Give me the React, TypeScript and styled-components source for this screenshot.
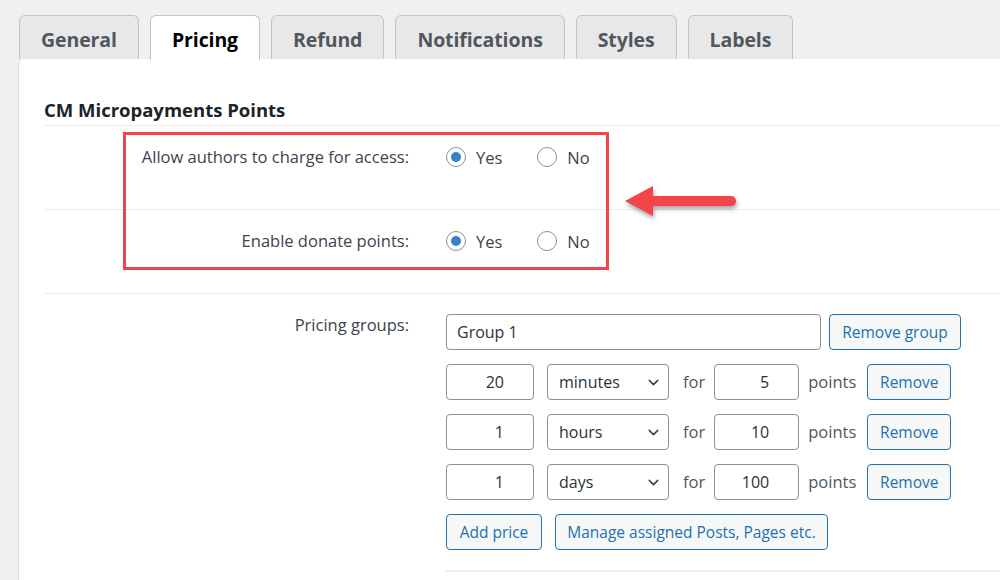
import React from "react";
import styled, { createGlobalStyle } from "styled-components";
import { ChevronDown } from "lucide-react";

const GlobalStyle = createGlobalStyle`
  html, body {
    margin: 0;
    padding: 0;
    background: #f0f0f1;
    font-family: "Open Sans", "Noto Sans", sans-serif;
    color: #3c434a;
  }
  * { box-sizing: border-box; }
`;

export const Page = styled.div`
  position: relative;
  width: 1000px;
  height: 580px;
  overflow: hidden;
  padding: 15px 0 0 18px;
`;

export const TabBar = styled.div`
  display: flex;
  gap: 11px;
  padding-left: 1px;
  height: 44px;
`;

export const Tab = styled.div<{ $active?: boolean }>`
  display: flex;
  align-items: center;
  justify-content: center;
  height: ${(p) => (p.$active ? "45px" : "44px")};
  padding: 3px 21px 0;
  border: 1px solid #c3c4c7;
  border-bottom: none;
  border-radius: 6px 6px 0 0;
  background: ${(p) => (p.$active ? "#fff" : "#e8e8e8")};
  color: ${(p) => (p.$active ? "#000" : "#50575e")};
  font-size: 19.5px;
  font-weight: 700;
  letter-spacing: -0.1px;
  position: relative;
  z-index: 1;
`;

export const Panel = styled.div`
  background: #fff;
  border-left: 1px solid #dcdcde;
  border-radius: 6px 0 0 0;
  padding: 0 0 0 25px;
  height: 600px;
`;

export const Heading = styled.h2`
  margin: 0;
  padding: 39px 0 3px;
  font-size: 18.5px;
  font-weight: 700;
  line-height: 24px;
  color: #1d2327;
`;

export const Row = styled.div`
  display: grid;
  grid-template-columns: 365px 1fr;
  column-gap: 37px;
  border-top: 1px solid #ececec;
  padding: 19px 0 20px;
`;

export const Label = styled.div`
  text-align: right;
  font-size: 16.5px;
  line-height: 24px;
  color: #3c434a;
`;

export const RadioField = styled.div`
  display: flex;
  align-items: center;
  height: 24px;
  margin-bottom: 20px;
`;

export const RadioOption = styled.label`
  display: flex;
  align-items: center;
  gap: 10px;
  margin-right: 35px;
  font-size: 16.5px;
  color: #3c434a;
`;

export const Radio = styled.input`
  appearance: none;
  margin: 0;
  width: 20px;
  height: 20px;
  border-radius: 50%;
  border: 1px solid #8c8f94;
  background: #fff;
  display: grid;
  place-items: center;
  &:checked::before {
    content: "";
    width: 10px;
    height: 10px;
    border-radius: 50%;
    background: #3582c4;
  }
`;

export const Fields = styled.div`
  display: flex;
  flex-direction: column;
  gap: 14px;
  padding: 1px 0 20px;
  border-bottom: 2px solid #ececec;
  margin-bottom: -40px;
`;

export const Line = styled.div`
  display: flex;
  align-items: center;
  height: 36px;
  font-size: 16.5px;
  color: #50575e;
`;

export const TextInput = styled.input<{ $width: number; $number?: boolean }>`
  width: ${(p) => p.$width}px;
  height: 36px;
  margin: 0;
  border: 1px solid #8c8f94;
  border-radius: 4px;
  background: #fff;
  font-family: inherit;
  font-size: 16px;
  color: #2c3338;
  text-align: ${(p) => (p.$number ? "right" : "left")};
  padding: ${(p) => (p.$number ? "0 29px 0 8px" : "0 10px")};
  outline: none;
`;

export const SelectWrap = styled.div`
  position: relative;
  width: 122px;
  height: 36px;
  margin-left: 13px;
  margin-right: 14px;
  svg {
    position: absolute;
    right: 7px;
    top: 10px;
    color: #3c434a;
    pointer-events: none;
  }
`;

export const Select = styled.select`
  appearance: none;
  width: 100%;
  height: 100%;
  margin: 0;
  border: 1px solid #8c8f94;
  border-radius: 4px;
  background: #fff;
  padding: 0 30px 0 11px;
  font-family: inherit;
  font-size: 16px;
  color: #2c3338;
`;

export const Word = styled.span<{ $left: number; $right: number }>`
  margin: 0 ${(p) => p.$right}px 0 ${(p) => p.$left}px;
  line-height: 36px;
`;

export const Button = styled.button<{ $width: number }>`
  width: ${(p) => p.$width}px;
  height: 36px;
  margin: 0;
  padding: 0;
  border: 1px solid #2271b1;
  border-radius: 4px;
  background: #f6f7f7;
  color: #2271b1;
  font-family: inherit;
  font-size: 15.5px;
  cursor: pointer;
`;

export const Callout = styled.div`
  position: absolute;
  left: 123px;
  top: 132px;
  width: 486px;
  height: 138px;
  border: 3px solid #f2444b;
  pointer-events: none;
`;

export const Arrow = styled.svg`
  position: absolute;
  left: 615px;
  top: 178px;
  filter: drop-shadow(1px 3px 2px rgba(0, 0, 0, 0.35));
`;

const prices = [
  { amount: "20", unit: "minutes", points: "5" },
  { amount: "1", unit: "hours", points: "10" },
  { amount: "1", unit: "days", points: "100" },
];

const tabs = ["General", "Pricing", "Refund", "Notifications", "Styles", "Labels"];

const YesNo = ({ name }: { name: string }) => (
  <RadioField>
    <RadioOption>
      <Radio type="radio" name={name} defaultChecked />
      Yes
    </RadioOption>
    <RadioOption>
      <Radio type="radio" name={name} />
      No
    </RadioOption>
  </RadioField>
);

export default function App() {
  return (
    <Page>
      <GlobalStyle />
      <TabBar>
        {tabs.map((t) => (
          <Tab key={t} $active={t === "Pricing"}>
            {t}
          </Tab>
        ))}
      </TabBar>
      <Panel>
        <Heading>CM Micropayments Points</Heading>
        <Row>
          <Label>Allow authors to charge for access:</Label>
          <YesNo name="charge" />
        </Row>
        <Row>
          <Label>Enable donate points:</Label>
          <YesNo name="donate" />
        </Row>
        <Row>
          <Label>Pricing groups:</Label>
          <Fields>
            <Line>
              <TextInput $width={375} defaultValue="Group 1" />
              <Button $width={132} style={{ marginLeft: 8 }}>
                Remove group
              </Button>
            </Line>
            {prices.map((p, i) => (
              <Line key={i}>
                <TextInput $width={88} $number defaultValue={p.amount} />
                <SelectWrap>
                  <Select defaultValue={p.unit}>
                    <option value="minutes">minutes</option>
                    <option value="hours">hours</option>
                    <option value="days">days</option>
                  </Select>
                  <ChevronDown size={17} strokeWidth={2.2} />
                </SelectWrap>
                <Word $left={0} $right={9}>for</Word>
                <TextInput $width={85} $number defaultValue={p.points} />
                <Word $left={9} $right={11}>points</Word>
                <Button $width={84}>Remove</Button>
              </Line>
            ))}
            <Line>
              <Button $width={96}>Add price</Button>
              <Button $width={273} style={{ marginLeft: 13 }}>
                Manage assigned Posts, Pages etc.
              </Button>
            </Line>
          </Fields>
        </Row>
      </Panel>
      <Callout />
      <Arrow width="130" height="50" viewBox="0 0 130 50">
        <path d="M10 23 L38 8 L38 38 Z" fill="#f2444b" />
        <line x1="36" y1="23" x2="116" y2="23" stroke="#f2444b" strokeWidth="10" strokeLinecap="round" />
      </Arrow>
    </Page>
  );
}
